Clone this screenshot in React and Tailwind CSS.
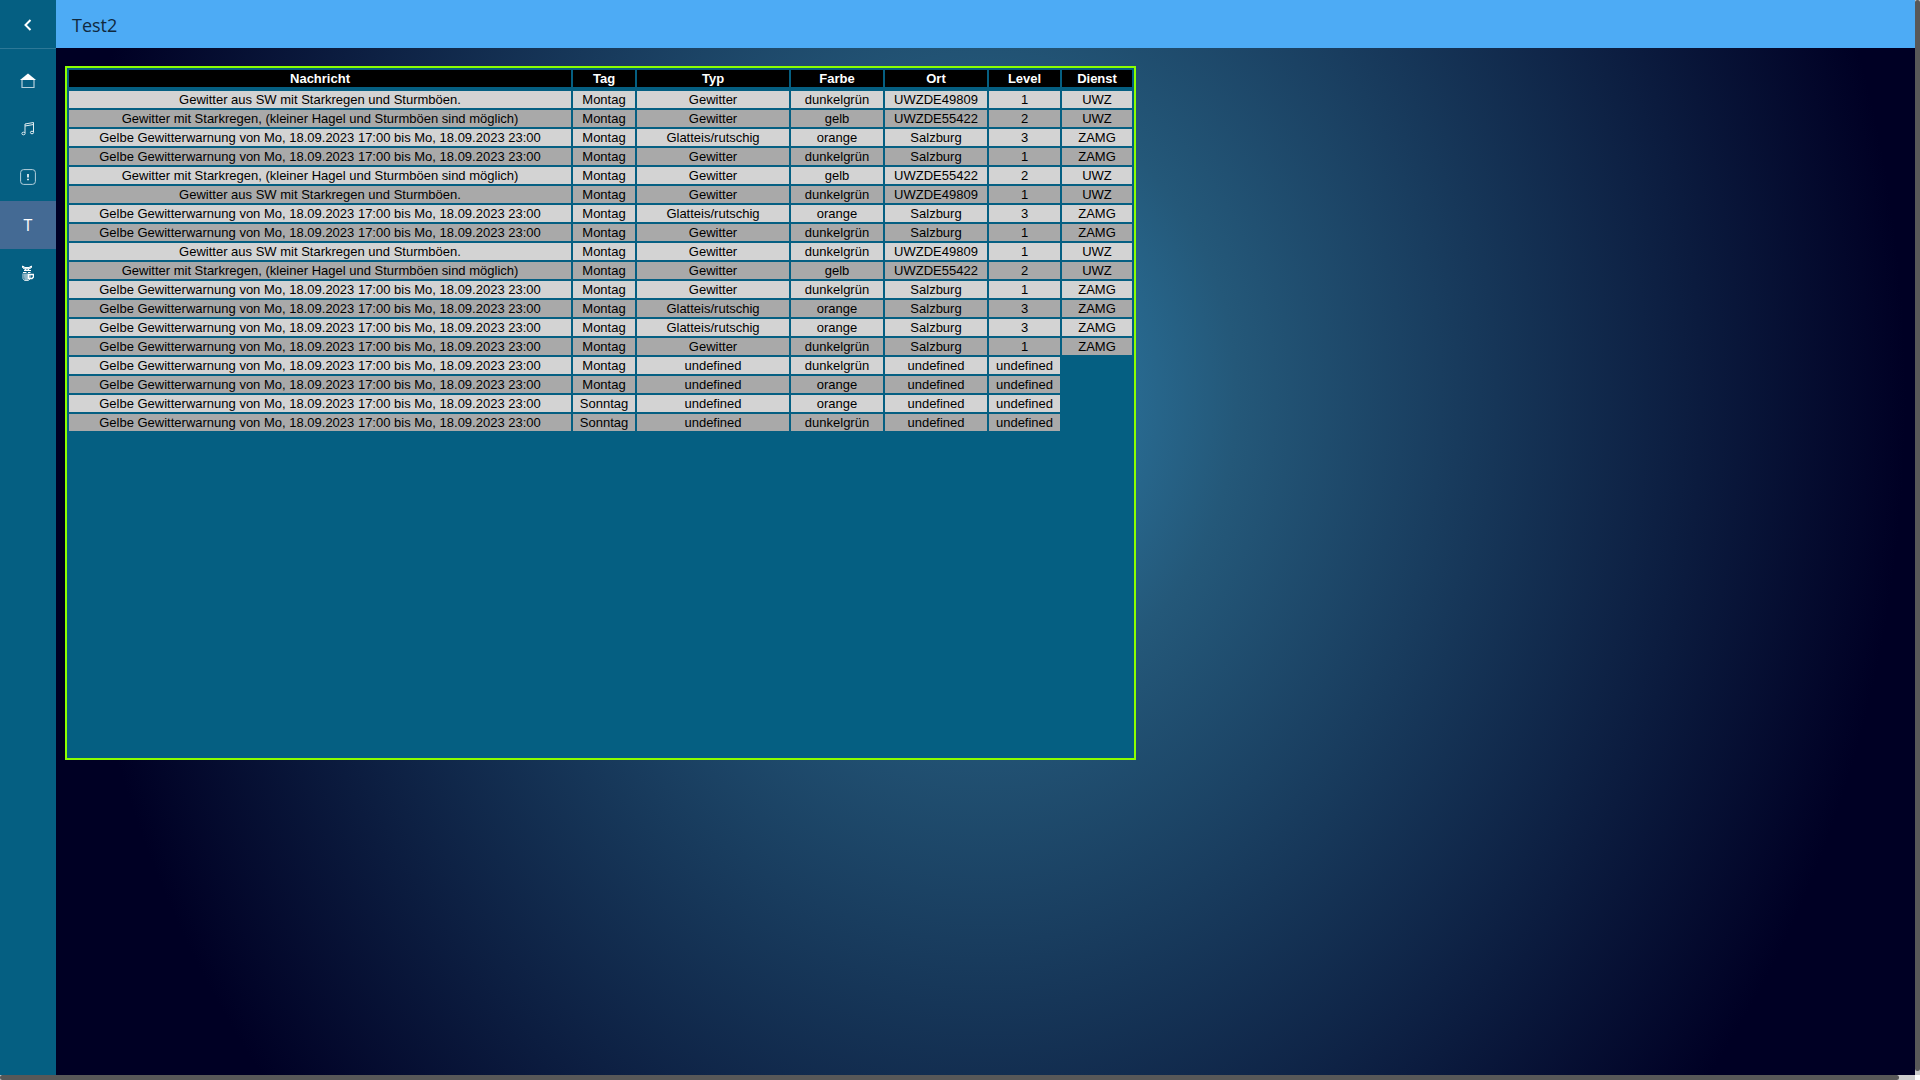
import React from "react";

const WARNING = "Gelbe Gewitterwarnung von Mo, 18.09.2023 17:00 bis Mo, 18.09.2023 23:00";
const HAIL = "Gewitter mit Starkregen, (kleiner Hagel und Sturmböen sind möglich)";
const STORM = "Gewitter aus SW mit Starkregen und Sturmböen.";

const columns = [
  { label: "Nachricht", width: "w-[502px]" },
  { label: "Tag", width: "w-[62px]" },
  { label: "Typ", width: "w-[152px]" },
  { label: "Farbe", width: "w-[92px]" },
  { label: "Ort", width: "w-[102px]" },
  { label: "Level", width: "w-[71px]" },
  { label: "Dienst", width: "w-[70px]" },
];

const rows = [
  [STORM, "Montag", "Gewitter", "dunkelgrün", "UWZDE49809", "1", "UWZ"],
  [HAIL, "Montag", "Gewitter", "gelb", "UWZDE55422", "2", "UWZ"],
  [WARNING, "Montag", "Glatteis/rutschig", "orange", "Salzburg", "3", "ZAMG"],
  [WARNING, "Montag", "Gewitter", "dunkelgrün", "Salzburg", "1", "ZAMG"],
  [HAIL, "Montag", "Gewitter", "gelb", "UWZDE55422", "2", "UWZ"],
  [STORM, "Montag", "Gewitter", "dunkelgrün", "UWZDE49809", "1", "UWZ"],
  [WARNING, "Montag", "Glatteis/rutschig", "orange", "Salzburg", "3", "ZAMG"],
  [WARNING, "Montag", "Gewitter", "dunkelgrün", "Salzburg", "1", "ZAMG"],
  [STORM, "Montag", "Gewitter", "dunkelgrün", "UWZDE49809", "1", "UWZ"],
  [HAIL, "Montag", "Gewitter", "gelb", "UWZDE55422", "2", "UWZ"],
  [WARNING, "Montag", "Gewitter", "dunkelgrün", "Salzburg", "1", "ZAMG"],
  [WARNING, "Montag", "Glatteis/rutschig", "orange", "Salzburg", "3", "ZAMG"],
  [WARNING, "Montag", "Glatteis/rutschig", "orange", "Salzburg", "3", "ZAMG"],
  [WARNING, "Montag", "Gewitter", "dunkelgrün", "Salzburg", "1", "ZAMG"],
  [WARNING, "Montag", "undefined", "dunkelgrün", "undefined", "undefined"],
  [WARNING, "Montag", "undefined", "orange", "undefined", "undefined"],
  [WARNING, "Sonntag", "undefined", "orange", "undefined", "undefined"],
  [WARNING, "Sonntag", "undefined", "dunkelgrün", "undefined", "undefined"],
];

const HomeIcon = () => (
  <svg width="16" height="16" viewBox="0 0 16 16" fill="none">
    <path d="M8 0.5 16 7H0Z" fill="white" />
    <path d="M2 7v7.5h12V7" stroke="#b5d0dc" strokeWidth="1.2" />
  </svg>
);

const MusicIcon = () => (
  <svg width="16" height="16" viewBox="0 0 16 16" fill="none" stroke="#e3eef2">
    <path d="M5 12V3l8.5-1.5V11M5 5l8.5-1.5" />
    <ellipse cx="3.5" cy="12.5" rx="1.6" ry="1.3" />
    <ellipse cx="12" cy="11.5" rx="1.6" ry="1.3" />
  </svg>
);

const AlertIcon = () => (
  <svg width="16" height="16" viewBox="0 0 16 16" fill="none">
    <rect x="0.6" y="0.6" width="14.8" height="14.8" rx="3" stroke="#b5d0dc" />
    <path d="M8 5v3.5M8 9.7v1.6" stroke="white" strokeWidth="1.6" />
  </svg>
);

const CatCupIcon = () => (
  <svg width="12" height="16" viewBox="0 0 12 16" fill="none" stroke="white">
    <path d="M0.5 1v1.5l2 1.5h4.5l2.5-1.5V1L7 2.500H3Z" fill="#b5d0dc" />
    <path d="M2 5.500h7M1 7.500h3.500M6 7.500h2.500M3.500 4v2M6.500 4v2" />
    <path d="M1 8.500v5L2.500 15.500h4L8 14V9" stroke="#cfe0e7" />
    <path d="M1.500 8.500h5v6.500h-4Z" fill="#8fb7c8" stroke="none" />
    <path d="M6.500 9.500h5V12L10 13.500H6.500Z" strokeWidth="1.5" />
  </svg>
);

const navItems = [
  { label: "Home", icon: <HomeIcon /> },
  { label: "Musik", icon: <MusicIcon /> },
  { label: "Warnungen", icon: <AlertIcon /> },
  { label: "Test2", icon: "T", active: true },
  { label: "Katze", icon: <CatCupIcon /> },
];

const Sidebar = () => (
  <aside className="w-14 shrink-0 bg-[#055f82] text-white">
    <div className="border-b border-[#2d7897]">
      <button aria-label="Zurück" className="flex h-12 w-full items-center justify-center pt-0.5">
        <svg width="8" height="12" viewBox="0 0 8 12" fill="none">
          <path d="M6.5 1 1.5 6l5 5" stroke="white" strokeWidth="2" />
        </svg>
      </button>
    </div>
    <nav className="pt-2">
      {navItems.map((item) => (
        <a
          key={item.label}
          href="#"
          aria-label={item.label}
          className={`flex h-12 items-center justify-center text-base ${item.active ? "bg-[#446a94]" : ""}`}
        >
          {item.icon}
        </a>
      ))}
    </nav>
  </aside>
);

const WarningTable = () => (
  <div className="h-[694px] w-[1071px] border-2 border-[#8cff00] bg-[#055f82]">
    <table className="w-full table-fixed border-separate border-spacing-[2px] text-center font-['Liberation_Sans',Arial,sans-serif] text-[13px] leading-[17px] text-black">
      <thead>
        <tr className="bg-black text-white">
          {columns.map((col) => (
            <th key={col.label} className={`${col.width} p-0 font-bold`}>
              {col.label}
            </th>
          ))}
        </tr>
      </thead>
      {/* The empty row doubles the spacing below the header */}
      <tbody className="before:table-row before:content-['']">
        {rows.map((row, i) => (
          <tr key={i} className="odd:[&>td]:bg-[#d3d3d3] even:[&>td]:bg-[#a9a9a9]">
            {row.map((cell, j) => (
              <td key={j} className="p-0">
                {cell}
              </td>
            ))}
          </tr>
        ))}
      </tbody>
    </table>
  </div>
);

const App = () => {
  return (
    <div className="flex h-screen flex-col overflow-hidden bg-white font-['Open_Sans','Noto_Sans',sans-serif]">
      <div className="flex min-h-0 flex-1">
        <Sidebar />
        <div className="flex min-w-0 flex-1 flex-col">
          <header className="flex h-12 shrink-0 items-center bg-[#4dabf5] px-4 pt-0.5">
            <h1 className="text-lg text-[#10293d]">Test2</h1>
          </header>
          <main className="flex-1 bg-[radial-gradient(50%_108%_at_50%_34%,#2d78a4_0%,#28698f_16%,#245879_27%,#000024_99%)] px-[9px] pt-[18px]">
            <WarningTable />
          </main>
        </div>
        {/* Vertical scrollbar */}
        <div className="w-[5px] shrink-0 bg-[#cdcdcd] pb-[4px]">
          <div className="h-full rounded-full bg-[#585858]" />
        </div>
      </div>
      {/* Horizontal scrollbar */}
      <div className="mr-[5px] h-[5px] shrink-0 bg-[#cdcdcd] pr-4">
        <div className="h-full rounded-full bg-[#585858]" />
      </div>
    </div>
  );
};

export default App;
